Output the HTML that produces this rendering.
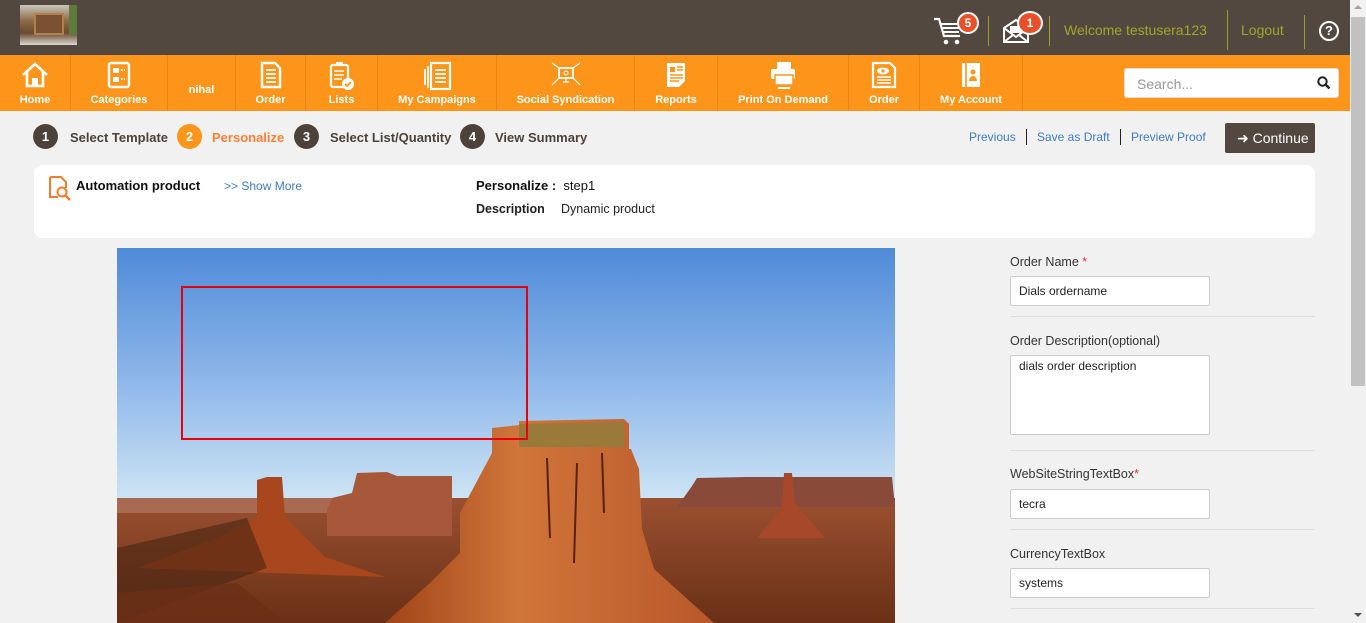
<!DOCTYPE html>
<html><head><meta charset="utf-8"><style>
*{box-sizing:border-box;margin:0;padding:0}
body{width:1366px;height:623px;overflow:hidden;background:#f1f1f1;font-family:"Liberation Sans",Arial,sans-serif;position:relative}
.top{position:absolute;left:0;top:0;width:1350px;height:55px;background:#534840}
.nav{position:absolute;left:0;top:55px;width:1350px;height:56px;background:#fd951a}
.ni{position:absolute;top:0;height:56px;border-right:1px solid #e98510;color:#fff;font-size:11px;font-weight:bold;text-align:center}
.ni span{position:absolute;bottom:5px;left:0;right:0}
.ni svg{position:absolute;top:6px;left:50%;transform:translateX(-50%)}
.a{position:absolute;white-space:nowrap}
.step{position:absolute;top:124px;width:25px;height:25px;border-radius:50%;background:#4c423a;color:#fff;font-size:13px;font-weight:bold;text-align:center;line-height:25px}
.sl{position:absolute;top:130px;font-size:13px;font-weight:bold;color:#4c423a}
.lnk{color:#3d7cc0;font-size:12px;top:130px}
.lbl{position:absolute;left:1010px;font-size:12.5px;color:#333}
.inp{position:absolute;left:1010px;width:200px;height:30px;background:#fff;border:1px solid #ccc;border-radius:2px;font-size:12px;color:#222;padding:7px 8px}
.hr{position:absolute;left:1010px;width:305px;height:1px;background:#ddd}
</style></head><body>
<div class="top">
 <div style="position:absolute;left:20px;top:5px;width:57px;height:40px;background:linear-gradient(180deg,#c9c6bb 0%,#8c6a46 40%,#6b4a30 70%,#d8d8d0 100%)"><div style="position:absolute;left:14px;top:8px;width:30px;height:22px;background:#7a5232;border:2px solid #b08050"></div><div style="position:absolute;right:0;top:0;width:8px;height:30px;background:#5e7a3c"></div></div>
 <svg style="position:absolute;left:933px;top:16px" width="34" height="30" viewBox="0 0 34 30"><path d="M1 3h5l5 17h16" stroke="#fff" stroke-width="2.2" fill="none"/><path d="M8 8h20M9 12h18M10 16h16" stroke="#fff" stroke-width="2"/><circle cx="13" cy="26" r="2.3" fill="#fff"/><circle cx="24" cy="26" r="2.3" fill="#fff"/></svg>
 <div class="a" style="left:957px;top:12px;width:22px;height:22px;border-radius:50%;background:#e9502a;border:2px solid #fff;color:#fff;font-size:12px;font-weight:bold;text-align:center;line-height:18px">5</div>
 <div class="a" style="left:988px;top:16px;width:1px;height:30px;background:#9aa02a"></div>
 <svg style="position:absolute;left:1002px;top:18px" width="28" height="26" viewBox="0 0 28 26"><path d="M2 10l12-8 12 8v14H2z M2 10l12 9 12-9 M2 24l9-7 M26 24l-9-7" stroke="#fff" stroke-width="2" fill="none"/><rect x="8" y="8" width="12" height="7" fill="#fff"/></svg>
 <div class="a" style="left:1017px;top:11px;width:26px;height:24px;border-radius:50%;background:#e9502a;border:2px solid #fff;color:#fff;font-size:12px;font-weight:bold;text-align:center;line-height:20px">1</div>
 <div class="a" style="left:1049px;top:16px;width:1px;height:30px;background:#9aa02a"></div>
 <div class="a" style="left:1064px;top:22px;color:#a2a52b;font-size:14px">Welcome testusera123</div>
 <div class="a" style="left:1227px;top:10px;width:1px;height:40px;background:#9aa02a"></div>
 <div class="a" style="left:1241px;top:22px;color:#a2a52b;font-size:14px">Logout</div>
 <div class="a" style="left:1304px;top:15px;width:1px;height:34px;background:#9aa02a"></div>
 <div class="a" style="left:1319px;top:21px;width:20px;height:20px;border:2px solid #fff;border-radius:50%;color:#fff;font-size:13px;font-weight:bold;text-align:center;line-height:16px">?</div>
</div>
<div class="nav">
 <div class="ni" style="left:0;width:71px"><svg width="30" height="28" viewBox="0 0 30 28"><path d="M3 14L15 3l12 11M7 11v14h16V11" stroke="#fff" stroke-width="2.6" fill="none"/><rect x="12" y="17" width="6" height="8" fill="#fff"/></svg><span>Home</span></div>
 <div class="ni" style="left:71px;width:97px"><svg width="24" height="28" viewBox="0 0 24 28"><rect x="2" y="2" width="20" height="24" rx="2" stroke="#fff" stroke-width="2.4" fill="none"/><rect x="6" y="7" width="6" height="5" fill="#fff"/><rect x="6" y="16" width="6" height="5" fill="#fff"/><path d="M14 9h4M14 18h4" stroke="#fff" stroke-width="2" stroke-dasharray="1.5 1.5"/></svg><span>Categories</span></div>
 <div class="ni" style="left:168px;width:68px"><span style="bottom:15px">nihal</span></div>
 <div class="ni" style="left:236px;width:70px"><svg width="22" height="28" viewBox="0 0 22 28"><path d="M2 2h13l5 5v19H2z" stroke="#fff" stroke-width="2.4" fill="none"/><path d="M6 9h10M6 13h10M6 17h10M6 21h10" stroke="#fff" stroke-width="1.8"/></svg><span>Order</span></div>
 <div class="ni" style="left:306px;width:72px"><svg width="26" height="30" viewBox="0 0 26 30"><rect x="2" y="4" width="17" height="22" rx="2" stroke="#fff" stroke-width="2.2" fill="none"/><rect x="7" y="1" width="7" height="4" fill="#fff"/><path d="M5 10h10M5 14h10M5 18h8" stroke="#fff" stroke-width="1.6"/><circle cx="19" cy="23" r="6" fill="#fff"/><path d="M16 23l2 2 4-4" stroke="#fd951a" stroke-width="1.8" fill="none"/></svg><span>Lists</span></div>
 <div class="ni" style="left:378px;width:119px"><svg width="30" height="30" viewBox="0 0 30 30"><rect x="9" y="2" width="19" height="26" stroke="#fff" stroke-width="2.2" fill="none"/><path d="M6 5v22M3 8v16" stroke="#fff" stroke-width="1.8"/><path d="M13 9h11M13 13h11M13 17h11M13 21h11" stroke="#fff" stroke-width="1.8"/></svg><span>My Campaigns</span></div>
 <div class="ni" style="left:497px;width:138px"><svg width="32" height="28" viewBox="0 0 32 28"><rect x="9" y="7" width="14" height="10" stroke="#fff" stroke-width="1.8" fill="none"/><circle cx="16" cy="12" r="2" stroke="#fff" fill="none"/><path d="M2 2l7 5M30 2l-7 5M2 24l7-7M30 24l-7-7M16 17v4M13 21h6" stroke="#fff" stroke-width="1.2"/></svg><span>Social Syndication</span></div>
 <div class="ni" style="left:635px;width:83px"><svg width="22" height="28" viewBox="0 0 22 28"><path d="M2 2h18v18l-6 6H2z" fill="#fff"/><path d="M5 6h5v5H5z" fill="#fd951a"/><path d="M12 6h6M12 9h6M5 14h13M5 17h13M5 20h9" stroke="#fd951a" stroke-width="1.4"/></svg><span>Reports</span></div>
 <div class="ni" style="left:718px;width:131px"><svg width="30" height="30" viewBox="0 0 30 30"><rect x="9" y="1" width="14" height="7" fill="#fff"/><rect x="3" y="8" width="24" height="10" rx="2" fill="#fff"/><rect x="7" y="14" width="18" height="10" fill="#fff" stroke="#fd951a" stroke-width="1.5"/><path d="M10 27h12" stroke="#fff" stroke-width="2"/></svg><span>Print On Demand</span></div>
 <div class="ni" style="left:849px;width:71px"><svg width="26" height="28" viewBox="0 0 26 28"><path d="M2 2h17l5 5v19H2z" stroke="#fff" stroke-width="2.2" fill="none"/><ellipse cx="12" cy="10" rx="6" ry="3.5" fill="#fff"/><circle cx="12" cy="10" r="1.6" fill="#fd951a"/><path d="M6 16h14M6 19h14M6 22h14" stroke="#fff" stroke-width="1.6"/></svg><span>Order</span></div>
 <div class="ni" style="left:920px;width:103px"><svg width="22" height="28" viewBox="0 0 22 28"><rect x="2" y="2" width="18" height="24" fill="#fff"/><path d="M6 2v24" stroke="#fd951a" stroke-width="1.6"/><circle cx="13" cy="11" r="2.5" fill="#fd951a"/><path d="M9 20a4 5 0 0 1 8 0z" fill="#fd951a"/></svg><span>My Account</span></div>
 <div class="a" style="left:1124px;top:13px;width:215px;height:30px;background:#fff;border:1px solid #ddd;border-radius:3px;padding:7px 12px;color:#999;font-size:14px">Search...</div>
 <svg style="position:absolute;left:1317px;top:21px" width="14" height="14" viewBox="0 0 14 14"><circle cx="5.5" cy="5.5" r="4.2" stroke="#222" stroke-width="2" fill="none"/><path d="M8.5 8.5l4 4" stroke="#222" stroke-width="2.4"/></svg>
</div>
<div class="step" style="left:33px">1</div><div class="sl" style="left:70px">Select Template</div>
<div class="step" style="left:177px;background:#fd951a">2</div><div class="sl" style="left:212px;color:#fd7f36">Personalize</div>
<div class="step" style="left:294px">3</div><div class="sl" style="left:330px">Select List/Quantity</div>
<div class="step" style="left:460px">4</div><div class="sl" style="left:495px">View Summary</div>
<div class="a lnk" style="left:969px">Previous</div><div class="a" style="left:1026px;top:129px;width:1px;height:16px;background:#222"></div>
<div class="a lnk" style="left:1037px">Save as Draft</div><div class="a" style="left:1120px;top:129px;width:1px;height:16px;background:#222"></div>
<div class="a lnk" style="left:1131px">Preview Proof</div>
<div class="a" style="left:1225px;top:123px;width:90px;height:30px;background:#534840;border-radius:2px;color:#fff;font-size:14px;line-height:30px;padding-left:12px">&#10140; Continue</div>
<div class="a" style="left:34px;top:165px;width:1281px;height:73px;background:#fff;border-radius:8px"></div>
<svg style="position:absolute;left:48px;top:175px" width="26" height="26" viewBox="0 0 26 26"><path d="M2 2h11l5 5v6M2 2v20h8" stroke="#f47b2a" stroke-width="2" fill="none"/><circle cx="14" cy="17" r="4.5" stroke="#f47b2a" stroke-width="2" fill="none"/><path d="M17 20l5 5" stroke="#f47b2a" stroke-width="2.4"/></svg>
<div class="a" style="left:76px;top:178px;font-size:13px;font-weight:bold;color:#111">Automation product</div>
<div class="a" style="left:224px;top:179px;font-size:12px;color:#3d7cc0">&gt;&gt; Show More</div>
<div class="a" style="left:476px;top:178px;font-size:13px;color:#111"><b>Personalize :</b>&nbsp; step1</div>
<div class="a" style="left:476px;top:202px;font-size:12.5px;color:#222"><b>Description</b></div>
<div class="a" style="left:561px;top:202px;font-size:12.5px;color:#222">Dynamic product</div>
<svg style="position:absolute;left:117px;top:248px" width="778" height="375" viewBox="0 0 778 375">
<defs><linearGradient id="sky" x1="0" y1="0" x2="0" y2="1"><stop offset="0" stop-color="#4f8bd8"/><stop offset="0.45" stop-color="#8fb8ea"/><stop offset="0.85" stop-color="#cfe5f4"/></linearGradient>
<linearGradient id="gr" x1="0" y1="0" x2="0" y2="1"><stop offset="0" stop-color="#9a5030"/><stop offset="1" stop-color="#6a3016"/></linearGradient>
<linearGradient id="bt" x1="0" y1="0" x2="1" y2="0"><stop offset="0" stop-color="#a04418"/><stop offset="0.4" stop-color="#d0753a"/><stop offset="1" stop-color="#b8582a"/></linearGradient></defs>
<rect width="778" height="300" fill="url(#sky)"/>
<rect y="250" width="778" height="125" fill="url(#gr)"/>
<path d="M0 250h270v15H0z" fill="#a86a50"/>
<path d="M210 262l5-12 20-5 5-20 30-1 10 4 55 0v60H210z" fill="#a8583a"/>
<path d="M575 238l5-8 50-1 60 0 85 0 3 30H560z" fill="#8a4a3a"/>
<path d="M640 290l25-30 2-35 8 0 3 30 30 35z" fill="#a8482a"/>
<path d="M20 320l80-30 40-20 0-38 10-3 15 0 3 40 40 40 60 20z" fill="#a8461e"/>
<path d="M0 300l130-30 20 50-150 55z" fill="#4a2412" opacity=".6"/>
<path d="M268 375l45-40 30-30 0-40 32-60 0-25 27-3 0-4 105-2 5 5 0 25 2 0 8 20 3 60 12 40 60 54z" fill="url(#bt)"/>
<path d="M402 180l0-4 105-2 0 25-105 0z" fill="#9a7a3a"/>
<path d="M430 210l3 80M460 215l-3 100M485 205l2 60" stroke="#5a2010" stroke-width="2"/>
<path d="M0 345l120 -10 50 40H0z" fill="#6a3016" opacity=".8"/>
</svg>
<div class="a" style="left:181px;top:286px;width:347px;height:154px;border:2px solid #e8000b"></div>
<div class="lbl" style="top:255px">Order Name <span style="color:#e33">*</span></div>
<div class="inp" style="top:276px">Dials ordername</div>
<div class="hr" style="top:316px"></div>
<div class="lbl" style="top:334px">Order Description(optional)</div>
<div class="inp" style="top:355px;height:80px;padding-top:3px">dials order description</div>
<div class="hr" style="top:450px"></div>
<div class="lbl" style="top:467px">WebSiteStringTextBox<span style="color:#e33">*</span></div>
<div class="inp" style="top:489px">tecra</div>
<div class="hr" style="top:529px"></div>
<div class="lbl" style="top:547px">CurrencyTextBox</div>
<div class="inp" style="top:568px">systems</div>
<div class="hr" style="top:608px"></div>
<div class="a" style="left:1350px;top:0;width:16px;height:623px;background:#f1f1f1"></div>
<div class="a" style="left:1351px;top:17px;width:14px;height:369px;background:#c1c1c1"></div>
<div class="a" style="left:1354px;top:5px;width:0;height:0;border:4px solid transparent;border-bottom-color:#a3a3a3;border-top:0"></div>
<div class="a" style="left:1354px;top:613px;width:0;height:0;border:4px solid transparent;border-top-color:#505050;border-bottom:0"></div>
</body></html>
